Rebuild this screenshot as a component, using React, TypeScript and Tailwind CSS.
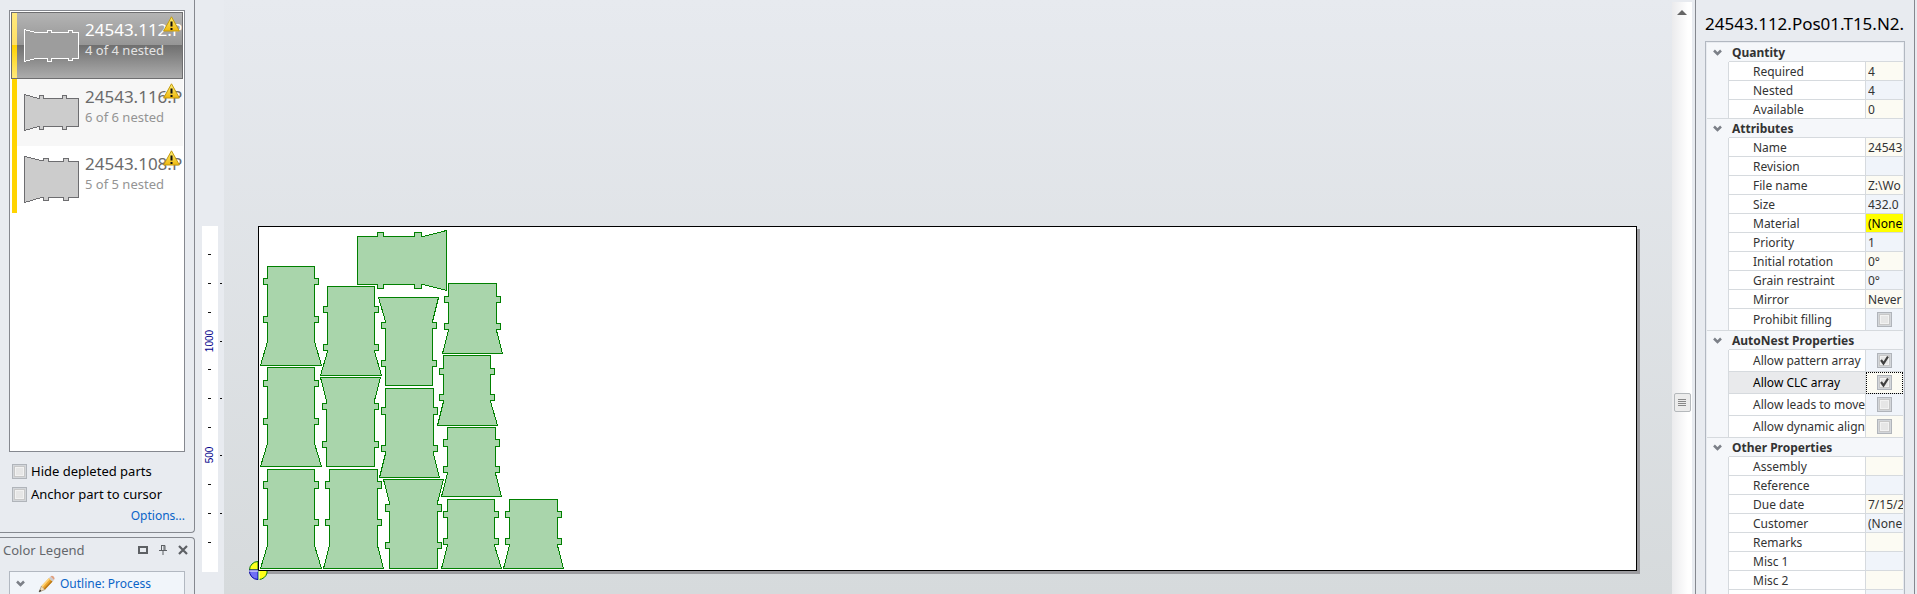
import React from 'react';

type Tab = [number, number];
type Part = {
  body: [number, number, number, number]; // left, right, top, bottom
  flare: [number, number];
  taper: number;
  tabX: [number, number];
  tabs: [Tab, Tab];
  inverted?: boolean;
};

const PARTS: Part[] = [
  { body: [267, 314, 266, 365], flare: [260, 321], taper: 341, tabX: [263, 318], tabs: [[278, 284], [316, 322]] },
  { body: [267, 314, 367, 466], flare: [260, 321], taper: 443, tabX: [263, 318], tabs: [[380, 386], [418, 424]] },
  { body: [267, 314, 469, 568], flare: [260, 321], taper: 545, tabX: [263, 318], tabs: [[481, 488], [519, 525]] },
  { body: [327, 374, 286, 375], flare: [320, 381], taper: 351, tabX: [323, 378], tabs: [[306, 312], [344, 350]] },
  { body: [326, 374, 377, 466], flare: [320, 380], taper: 400, tabX: [322, 378], tabs: [[403, 409], [441, 447]], inverted: true },
  { body: [329, 377, 469, 568], flare: [323, 383], taper: 545, tabX: [325, 381], tabs: [[481, 488], [519, 525]] },
  { body: [385, 432, 297, 385], flare: [378, 438], taper: 321, tabX: [381, 436], tabs: [[322, 328], [360, 366]], inverted: true },
  { body: [385, 433, 388, 477], flare: [379, 439], taper: 453, tabX: [381, 437], tabs: [[407, 414], [445, 451]] },
  { body: [389, 437, 479, 568], flare: [383, 443], taper: 502, tabX: [385, 441], tabs: [[504, 511], [542, 548]], inverted: true },
  { body: [448, 496, 283, 353], flare: [442, 502], taper: 330, tabX: [444, 500], tabs: [[296, 302], [323, 329]] },
  { body: [443, 490, 355, 425], flare: [437, 497], taper: 401, tabX: [439, 494], tabs: [[368, 374], [394, 400]] },
  { body: [447, 495, 427, 496], flare: [441, 501], taper: 473, tabX: [443, 499], tabs: [[439, 446], [466, 472]] },
  { body: [447, 494, 499, 568], flare: [441, 501], taper: 545, tabX: [443, 498], tabs: [[511, 517], [538, 544]] },
  { body: [509, 557, 499, 568], flare: [503, 563], taper: 545, tabX: [505, 561], tabs: [[511, 517], [538, 544]] },
];

function partPath({ body, flare, taper, tabX, tabs, inverted }: Part) {
  const [l, r, t, b] = body;
  const [[a1, a2], [b1, b2]] = tabs;
  const right = `V${a1}H${tabX[1]}V${a2}H${r}V${b1}H${tabX[1]}V${b2}H${r}`;
  const left = `V${b2}H${tabX[0]}V${b1}H${l}V${a2}H${tabX[0]}V${a1}H${l}`;
  return inverted
    ? `M${flare[0]} ${t}H${flare[1]}L${r} ${taper}${right}V${b}H${l}${left}V${taper}Z`
    : `M${l} ${t}H${r}${right}V${taper}L${flare[1]} ${b}H${flare[0]}L${l} ${taper}${left}Z`;
}

function NestedParts() {
  return (
    <svg className="block" width="320" height="343" viewBox="259 227 320 343" shapeRendering="crispEdges" aria-hidden="true">
      <g transform="translate(0.5 0.5)" fill="#a9d5ab" stroke="#008000" strokeWidth="1">
        {PARTS.map((p, i) => (
          <path key={i} d={partPath(p)} />
        ))}
        <path d="M357 236H377V232H383V236H414V232H421V236H423L446 230V290L423 284H421V288H414V284H383V288H377V284H357Z" />
      </g>
    </svg>
  );
}

function Ruler() {
  return (
    <svg className="block" width="22" height="346" viewBox="0 0 22 346" shapeRendering="crispEdges" aria-label="Vertical ruler">
      <rect width="16" height="346" fill="#fff" />
      {[28, 57, 86, 143, 172, 201, 258, 287, 316].map((y) => (
        <rect key={y} x="6" y={y} width="3" height="1" fill="#111" />
      ))}
      {[57, 115, 172, 229, 287].map((y) => (
        <rect key={y} x="18" y={y} width="2" height="1" fill="#111" />
      ))}
      <g fill="#00008b" fontSize="10" textAnchor="middle" className="font-['Liberation_Sans_Narrow','Liberation_Sans',sans-serif]">
        <text transform="translate(11 115) rotate(-90)">1000</text>
        <text transform="translate(11 229) rotate(-90)">500</text>
      </g>
    </svg>
  );
}

function OriginMarker() {
  return (
    <svg className="absolute -left-2.5 -bottom-2.5" width="19" height="19" viewBox="0 0 19 19" aria-hidden="true">
      <path d="M9 9V.5A8.5 8.5 0 0 0 .5 9Z" fill="#ffff1a" stroke="#0a7a0a" />
      <path d="M9 9H.5A8.5 8.5 0 0 0 9 18.500Z" fill="#7070f5" stroke="#0000a0" />
      <path d="M9.500 9.500V18.500A8.500 8.500 0 0 0 18 12V9.500Z" fill="#ffff1a" stroke="#0a7a0a" />
      <path d="M9 10H0M10 9V19" stroke="#fff" />
      <path d="M9.500 0V9.500H19" stroke="#000" fill="none" />
    </svg>
  );
}

function WarningIcon() {
  return (
    <svg className="absolute top-1 right-[3px]" width="17" height="16" viewBox="0 0 17 16" aria-label="Warning">
      <defs>
        <linearGradient id="warn" x1="0" y1="0" x2="0" y2="1">
          <stop offset="0" stopColor="#fff27a" />
          <stop offset="1" stopColor="#efb80c" />
        </linearGradient>
      </defs>
      <path d="M8.500 .800L16.400 15H.600Z" fill="url(#warn)" stroke="#c39a10" strokeLinejoin="round" />
      <path d="M7.500 5.500h2v5h-2zM7.500 12h2v2h-2z" fill="#111" />
    </svg>
  );
}

const NESTED_ITEMS = [
  {
    name: '24543.112.P', status: '4 of 4 nested', selected: true, row: '',
    shape: 'M0 17L11 20H23V18H27V20H44V18H48V20H54V46H48V48H44V46H27V49H23V46H11L0 49Z',
  },
  {
    name: '24543.116.P', status: '6 of 6 nested', selected: false, row: 'bg-[#f7f7f7]',
    shape: 'M0 15L14 19H15V16H19V19H38V16H42V19H54V47H42V50H38V47H19V50H15V47H14L0 51Z',
  },
  {
    name: '24543.108.P', status: '5 of 5 nested', selected: false, row: 'bg-white',
    shape: 'M0 10L17 14H19V12H24V15H39V12H44V15H54V51H44V54H39V51H24V54H19V51H17L0 56Z',
  },
];

function NestItem({ item }: { item: (typeof NESTED_ITEMS)[number] }) {
  const on = item.selected;
  return (
    <li className={`relative flex h-[67px] overflow-hidden ${on ? 'bg-linear-[180deg,#b5b5b5_0%,#969696_49%,#707070_50%,#aeaeae_100%]' : ''}`}>
      <span className={`ml-px w-[5px] shrink-0 ${on ? 'bg-linear-[180deg,#ffe97e_0%,#ffe066_49%,#ffd200_50%,#ffea80_100%]' : 'bg-[#ffd400]'}`} />
      <div className={`flex min-w-0 flex-1 ${item.row}`}>
        <svg className="ml-[7px] shrink-0" width="56" height="67" viewBox="0 0 56 67" shapeRendering="crispEdges" aria-hidden="true">
          <path transform="translate(.5 .5)" d={item.shape} fill={on ? '#9d9d9d' : '#cccccc'} stroke={on ? '#fff' : '#6d6d70'} />
        </svg>
        <div className="ml-[5px] pt-1.5 whitespace-nowrap">
          <div className={`text-[17px] leading-6 ${on ? 'text-white' : 'text-[#6b6b6b]'}`}>{item.name}</div>
          <div className={`text-[13px] leading-4 ${on ? 'text-[#e4e4e4]' : 'text-[#949494]'}`}>{item.status}</div>
        </div>
      </div>
      {on && <span className="pointer-events-none absolute inset-0 border border-[#6e6e70]" />}
      <WarningIcon />
    </li>
  );
}

function CheckBox({ id, checked }: { id: string; checked?: boolean }) {
  return (
    <span className="relative inline-block size-[15px] shrink-0 align-middle">
      <input
        id={id}
        type="checkbox"
        defaultChecked={checked}
        className="peer block size-[15px] appearance-none border border-[#b0b4ba] bg-[#e6e6e6] shadow-[inset_0_0_0_1px_#d3d6da,inset_0_0_0_2px_#c8c8c8,inset_0_0_0_3px_#f2f2f2]"
      />
      <svg className="pointer-events-none absolute inset-0 hidden peer-checked:block" width="15" height="15" viewBox="0 0 15 15" fill="none" stroke="#404040" strokeWidth="2.200" aria-hidden="true">
        <path d="M4 7L6.500 10.500L11 3.500" />
      </svg>
    </span>
  );
}

function Chevron() {
  return (
    <svg width="9" height="8" viewBox="0 0 9 8" fill="none" stroke="#7c8088" strokeWidth="2.500" aria-hidden="true">
      <path d="M1 1.500L4.500 5L8 1.500" />
    </svg>
  );
}

function PencilIcon() {
  return (
    <svg width="18" height="18" viewBox="0 0 18 18" aria-hidden="true">
      <path d="M1 17L3.500 11L7 14.500Z" fill="#f3dcb4" stroke="#8a7a60" strokeWidth=".6" />
      <path d="M1 17L2 14.600L3.400 16Z" fill="#222" />
      <path d="M3.500 11L11 3L14.500 6.500L7 14.500Z" fill="#eda62c" />
      <path d="M3.500 11L11 3L12 4L4.700 12.200Z" fill="#ffd57b" />
      <path d="M5.900 13.400L13.400 5.400L14.500 6.500L7 14.500Z" fill="#b9781a" />
      <path d="M11 3L12.500 1.500L16 5L14.500 6.500Z" fill="#c9ccd2" />
      <path d="M12.500 1.500Q14 0 15.700 1.600Q17.400 3.400 16 5Z" fill="#e0a080" />
    </svg>
  );
}

type Field = { label: string; value?: string; check?: boolean; tone: 'cream' | 'blue' | 'yellow'; focused?: boolean };
const TONES = { cream: 'bg-[#fcfbf3]', blue: 'bg-[#f0f4fa]', yellow: 'bg-[#ffff00] text-black' };

const SECTIONS: { title: string; fields: Field[] }[] = [
  {
    title: 'Quantity',
    fields: [
      { label: 'Required', value: '4', tone: 'cream' },
      { label: 'Nested', value: '4', tone: 'blue' },
      { label: 'Available', value: '0', tone: 'cream' },
    ],
  },
  {
    title: 'Attributes',
    fields: [
      { label: 'Name', value: '24543', tone: 'cream' },
      { label: 'Revision', tone: 'blue' },
      { label: 'File name', value: 'Z:\\Wo', tone: 'cream' },
      { label: 'Size', value: '432.0', tone: 'blue' },
      { label: 'Material', value: '(None', tone: 'yellow' },
      { label: 'Priority', value: '1', tone: 'blue' },
      { label: 'Initial rotation', value: '0°', tone: 'cream' },
      { label: 'Grain restraint', value: '0°', tone: 'blue' },
      { label: 'Mirror', value: 'Never', tone: 'cream' },
      { label: 'Prohibit filling', check: false, tone: 'blue' },
    ],
  },
  {
    title: 'AutoNest Properties',
    fields: [
      { label: 'Allow pattern array', check: true, tone: 'blue' },
      { label: 'Allow CLC array', check: true, tone: 'cream', focused: true },
      { label: 'Allow leads to move', check: false, tone: 'blue' },
      { label: 'Allow dynamic align', check: false, tone: 'cream' },
    ],
  },
  {
    title: 'Other Properties',
    fields: [
      { label: 'Assembly', tone: 'cream' },
      { label: 'Reference', tone: 'blue' },
      { label: 'Due date', value: '7/15/2', tone: 'cream' },
      { label: 'Customer', value: '(None', tone: 'blue' },
      { label: 'Remarks', tone: 'cream' },
      { label: 'Misc 1', tone: 'blue' },
      { label: 'Misc 2', tone: 'cream' },
      { label: '', tone: 'blue' },
    ],
  },
];

function PropertyTable() {
  return (
    <table className="w-full table-fixed border-separate border-spacing-0 text-[12px] leading-4 text-[#333]">
      <colgroup>
        <col className="w-[22px]" />
        <col />
        <col className="w-[37px]" />
      </colgroup>
      {SECTIONS.map((section) => (
        <tbody key={section.title}>
          <tr className="h-[19px] bg-[#f5f7fa]">
            <td className="border-r border-[#f5f7fa] p-0 pl-1.5">
              <Chevron />
            </td>
            <th colSpan={2} scope="colgroup" className="border-b border-[#d6dade] p-0 pt-0.5 pl-[3px] text-left font-bold whitespace-nowrap">
              {section.title}
            </th>
          </tr>
          {section.fields.map((f, i) => {
            const last = i === section.fields.length - 1;
            const plain = f.check === undefined;
            const id = `field-${f.label.toLowerCase().replaceAll(' ', '-')}`;
            return (
              <tr key={f.label} className={plain ? 'h-[19px]' : 'h-[22px]'}>
                <td className={`border-r border-[#d6dade] bg-[#f5f7fa] p-0 ${last ? 'border-b' : ''}`} />
                <td className={`border-r border-b border-[#d6dade] p-0 pl-6 whitespace-nowrap ${plain ? 'pt-0.5' : ''} ${f.focused ? 'bg-[#e9eaec] text-black' : 'bg-white'}`}>
                  {plain ? f.label : <label htmlFor={id}>{f.label}</label>}
                </td>
                <td className={`border-b border-[#d6dade] p-0 ${plain ? 'pt-0.5' : ''} ${TONES[f.tone]} ${f.focused ? 'outline-1 -outline-offset-1 outline-dotted outline-black' : ''}`}>
                  {plain ? (
                    <div className="ml-0.5 overflow-hidden whitespace-nowrap">{f.value}</div>
                  ) : (
                    <div className="flex justify-center">
                      <CheckBox id={id} checked={f.check} />
                    </div>
                  )}
                </td>
              </tr>
            );
          })}
        </tbody>
      ))}
    </table>
  );
}

function LeftSidebar() {
  return (
    <aside className="flex w-[195px] shrink-0 flex-col gap-1">
      <section className="flex h-[533px] shrink-0 flex-col rounded-br-sm border-r border-b border-[#85888f] px-[9px] pt-2.5">
        <ul className="h-[442px] shrink-0 border border-[#85888f] bg-white p-px">
          {NESTED_ITEMS.map((item) => (
            <NestItem key={item.name} item={item} />
          ))}
        </ul>
        <div className="mt-2 flex flex-col pl-[3px] text-[13px] leading-[23px] text-black">
          <div className="flex items-center gap-1">
            <CheckBox id="hide-depleted" />
            <label htmlFor="hide-depleted">Hide depleted parts</label>
          </div>
          <div className="flex items-center gap-1">
            <CheckBox id="anchor-part" />
            <label htmlFor="anchor-part">Anchor part to cursor</label>
          </div>
        </div>
        <a href="#options" className="self-end text-[12px] leading-5 text-[#0a64c8]">Options...</a>
      </section>
      <section className="flex-1 rounded-tr-sm border-t border-r border-[#85888f]">
        <header className="flex h-[33px] items-center justify-between pr-1.5 pb-2.5 pl-[3px]">
          <h2 className="text-[13px] leading-4 text-[#64676c]">Color Legend</h2>
          <div className="flex items-center gap-2.5 text-[#5d6064]">
            <button type="button" aria-label="Maximize">
              <svg width="10" height="8" viewBox="0 0 10 8" fill="none" stroke="currentColor" strokeWidth="2"><path d="M1 1H9V7H1Z" /></svg>
            </button>
            <button type="button" aria-label="Pin">
              <svg width="10" height="10" viewBox="0 0 10 10" fill="none" stroke="currentColor"><path d="M3 .500H7M3.500 .500V5.500M6 .500V5.500M7 .500V5.500M1 5.500H9M5 6V10" /></svg>
            </button>
            <button type="button" aria-label="Close">
              <svg width="10" height="10" viewBox="0 0 10 10" fill="none" stroke="currentColor" strokeWidth="2.200"><path d="M1 1L9 9M9 1L1 9" /></svg>
            </button>
          </div>
        </header>
        <div className="mx-[9px] border border-[#b2b8c1] bg-[#f1f5fa]">
          <button type="button" className="flex h-6 items-center gap-[13px] pl-1.5 text-[12px] text-[#0a64c8]">
            <Chevron />
            <span className="flex items-center gap-1">
              <PencilIcon />
              Outline: Process
            </span>
          </button>
        </div>
      </section>
    </aside>
  );
}

export default function App() {
  return (
    <div className="flex h-screen overflow-hidden bg-[#e8ebf0] font-['Noto_Sans',sans-serif]">
      <LeftSidebar />
      <div className="w-[29px] shrink-0 pt-[226px] pl-[7px]">
        <Ruler />
      </div>
      <main className="min-w-0 flex-1 bg-linear-to-b from-[#e7eaef] to-[#d6dadc] px-[34px] pt-[226px]">
        <div className="relative mr-px h-[345px] border border-black bg-white shadow-[3px_3px_0_#9c9ca0]">
          <NestedParts />
          <OriginMarker />
        </div>
      </main>
      <div className="mt-0.5 mr-[3px] flex w-5 shrink-0 flex-col items-center bg-linear-to-r from-[#ebebed] to-white to-80%">
        <button type="button" aria-label="Scroll up" className="flex h-5 w-full items-center justify-center">
          <svg width="10" height="5" viewBox="0 0 10 5" fill="#666"><path d="M5 0L10 5H0Z" /></svg>
        </button>
        <button type="button" aria-label="Scroll thumb" className="mt-[371px] flex h-[19px] w-[17px] items-center justify-center rounded-xs border border-[#b4b8bb] bg-[#ececec]">
          <svg width="8" height="8" viewBox="0 0 8 8" stroke="#888" shapeRendering="crispEdges"><path d="M0 .500H8M0 2.500H8M0 4.500H8M0 6.500H8" /></svg>
        </button>
      </div>
      <aside className="mr-0.5 w-[220px] shrink-0 overflow-hidden border-x border-[#85888f] px-[9px] pt-2.5">
        <h1 className="h-[31px] overflow-hidden text-[17px] leading-7 whitespace-nowrap text-black">24543.112.Pos01.T15.N2.</h1>
        <div className="border border-[#b2b8c1] p-px">
          <PropertyTable />
        </div>
      </aside>
    </div>
  );
}
